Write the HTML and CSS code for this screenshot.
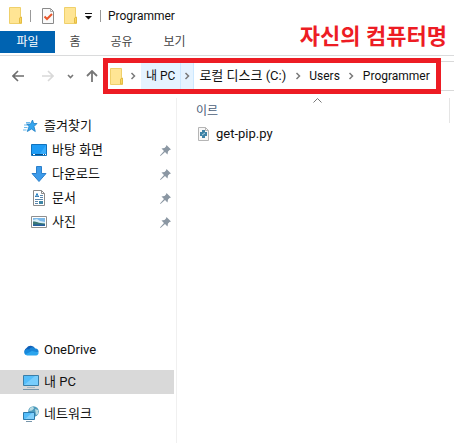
FILE: index.html
```html
<!DOCTYPE html>
<html lang="ko">
<head>
<meta charset="utf-8">
<title>Programmer</title>
<link rel="stylesheet" href="styles.css">
</head>
<body>
<svg class="defs" aria-hidden="true">
  <symbol id="folder" viewBox="0 0 14 17">
    <path d="M.5 .5h11v10h1v6H.5z" fill="#ffe594" stroke="#efd06b"/>
    <path d="M10.500 16v-5l2-1v6z" fill="#fbd65f" stroke="#e3bc45"/>
  </symbol>
  <symbol id="chev" viewBox="0 0 6 8"><path d="M1.500 1l3 3-3 3" fill="none" stroke="#7a7a7a" stroke-width="1.500"/></symbol>
  <symbol id="pin" viewBox="0 0 11 11">
    <path d="M6.500 0L11 4.500 9.500 5 8 6.500 7.500 9.500 5 7 .5 11 0 10.500 4 6 1.500 3.500 4.500 3 6 1.500z" fill="#8b97a3"/>
  </symbol>
</svg>

<header class="titlebar">
  <svg class="folder" aria-hidden="true"><use href="#folder"/></svg>
  <span class="bar"></span>
  <button class="quick check" aria-label="속성">
    <svg width="12" height="16" viewBox="0 0 12 16"><path d="M.5 .5h8l3 3v12H.5z" fill="#fafafa" stroke="#8a8a8a"/><path d="M8.500 .5v3h3" fill="none" stroke="#aaa"/><path d="M2.500 8.500l2.500 2.500 5-5" fill="none" stroke="#e8562a" stroke-width="2"/></svg>
  </button>
  <button class="quick" aria-label="새 폴더"><svg class="folder"><use href="#folder"/></svg></button>
  <button class="quick menu" aria-label="빠른 실행">
    <svg width="7" height="7" viewBox="0 0 7 7"><path d="M0 0h7v1H0zM0 3h7L3.500 6.500z" fill="#111"/></svg>
  </button>
  <span class="bar"></span>
  <h1 class="title">Programmer</h1>
</header>

<nav class="tabs">
  <button class="tab file">파일</button>
  <button class="tab home">홈</button>
  <button class="tab">공유</button>
  <button class="tab">보기</button>
  <span class="note">자신의 컴퓨터명</span>
</nav>

<div class="toolbar">
  <div class="history">
    <button aria-label="뒤로"><svg width="12" height="12" viewBox="0 0 12 12"><path d="M12 6H1M6 1L1 6l5 5" fill="none" stroke="#6e6e6e" stroke-width="1.600"/></svg></button>
    <button class="forward" aria-label="앞으로"><svg width="12" height="12" viewBox="0 0 12 12"><path d="M0 6h11M6 1l5 5-5 5" fill="none" stroke="#d9d9d9" stroke-width="1.600"/></svg></button>
    <button class="recent" aria-label="최근 위치"><svg width="7" height="5" viewBox="0 0 7 5"><path d="M1 1l2.500 2.500L6 1" fill="none" stroke="#777" stroke-width="1.600"/></svg></button>
    <button aria-label="위로"><svg width="12" height="12" viewBox="0 0 12 12"><path d="M6 12V1M1 6l5-5 5 5" fill="none" stroke="#777" stroke-width="1.800"/></svg></button>
  </div>
  <div class="address">
    <svg class="folder" aria-hidden="true"><use href="#folder"/></svg>
    <span class="sep first"><svg><use href="#chev"/></svg></span>
    <a class="crumb hot" href="#">내 PC</a>
    <span class="sep hot"><svg><use href="#chev"/></svg></span>
    <a class="crumb drive" href="#">로컬 디스크 (C:)</a>
    <span class="sep"><svg><use href="#chev"/></svg></span>
    <a class="crumb" href="#">Users</a>
    <span class="sep"><svg><use href="#chev"/></svg></span>
    <a class="crumb" href="#">Programmer</a>
    <span class="highlight"></span>
  </div>
</div>

<div class="body">
  <aside class="sidebar">
    <a class="item" href="#">
      <svg width="16" height="16" viewBox="0 0 16 16"><path d="M9.500 2l1.200 3.500H14l-3 3 1.300 5-3.800-2.500-4.200 2.500 1.800-5-2.600-2.500 4 0z" fill="#35a5ee" stroke="#1b7cc4" stroke-width=".8"/><path d="M3 4.500h4M1 7h3M1 9.500h3.500M0 12h3.500" stroke="#6bb9ed"/></svg>
      즐겨찾기</a>
    <a class="item sub" href="#">
      <svg width="16" height="16" viewBox="0 0 16 16"><path d="M.5 2.500h15v11H.5z" fill="#1e9cf5" stroke="#1173bd"/><path d="M8 13L15 3v10z" fill="#38acfb"/><path d="M1 12.500h14" stroke="#0b4f86"/><path d="M2 12.500h2M12 12.500h1M14 12.500h1" stroke="#fff"/></svg>
      바탕 화면<svg class="pin"><use href="#pin"/></svg></a>
    <a class="item sub" href="#">
      <svg width="16" height="16" viewBox="0 0 16 16"><path d="M5.500 .5h5v7h4.500L8 15.500 1 7.500h4.500z" fill="#3d9bea" stroke="#2b7fcb"/></svg>
      다운로드<svg class="pin"><use href="#pin"/></svg></a>
    <a class="item sub" href="#">
      <svg width="16" height="16" viewBox="0 0 16 16"><path d="M2.500 .5h8l3 3v12h-11z" fill="#fff" stroke="#8a8a8a"/><path d="M10.500 .5v3h3" fill="none" stroke="#8a8a8a"/><path d="M4 6.500h4M9 5.500h3M9 7.500h3M4 9.500h8M4 11.500h3M4 13.500h3" stroke="#5c88ad"/><path d="M4.500 7l1.500-3.500L7.500 7" fill="none" stroke="#1c7ac0"/><path d="M8 11h4v3H8z" fill="#3f86a6"/></svg>
      문서<svg class="pin"><use href="#pin"/></svg></a>
    <a class="item sub" href="#">
      <svg width="16" height="16" viewBox="0 0 16 16"><path d="M.5 2.500h15v11H.5z" fill="#fff" stroke="#8f8f8f"/><path d="M2 4h12v8H2z" fill="#7bb8e8"/><path d="M2 6l4-1 3 2 5 1v2H2z" fill="#d8edf7"/><path d="M2 7.500c3-.5 4 1.500 12 2V12H2z" fill="#3b7774"/><path d="M2 10.500h12V12H2z" fill="#255ea0"/></svg>
      사진<svg class="pin"><use href="#pin"/></svg></a>
    <a class="item cloud" href="#">
      <svg width="16" height="16" viewBox="0 0 16 16"><path d="M3 12a3.500 3.500 0 0 1 .5-6A4.800 4.800 0 0 1 12 6.500l-3 5z" fill="#0f5fb8"/><path d="M6 7.500A4 4 0 0 1 12.500 6.500a3.500 3.500 0 0 1 3 4L10 11z" fill="#1986d8"/><path d="M3 13a3 3 0 0 1 0-5.500c2-.7 3 0 4 .8l7 3.700-1 1z" fill="#1689dc"/><path d="M2 12.500l7-3.500 6.500 1.500A2.500 2.500 0 0 1 13 13.500H4z" fill="#2ba5ee"/></svg>
      OneDrive</a>
    <a class="item current" href="#" aria-current="page">
      <svg width="16" height="16" viewBox="0 0 16 16"><path d="M.5 1.500h15v10H.5z" fill="#54bdfa" stroke="#3a7ea8"/><path d="M1 11L12 2h3v9z" fill="#78cdfc"/><path d="M4 13.500h8" stroke="#a3b8c5"/><path d="M0 15.500h16" stroke="#7896aa"/></svg>
      내 PC</a>
    <a class="item network" href="#">
      <svg width="16" height="16" viewBox="0 0 16 16"><circle cx="10.500" cy="5.500" r="5.300" fill="#4c9abb"/><path d="M7 2l3-1.500 1 2-2 2-3 .5zM12 3l3 1v4l-2 1z" fill="#b9dce3"/><path d="M.5 6.500h11v7H.5z" fill="#54bdfa" stroke="#2e7bab"/><path d="M2 13L9 7h2v6z" fill="#82d0fb"/><path d="M3 15.500h6" stroke="#7896aa"/></svg>
      네트워크</a>
  </aside>
  <main class="content">
    <div class="columns">
      <button class="column">이르
        <svg class="sort" width="9" height="5" viewBox="0 0 9 5"><path d="M.5 4.500l4-4 4 4" fill="none" stroke="#777"/></svg>
      </button>
    </div>
    <a class="entry" href="#">
      <svg width="11" height="14" viewBox="0 0 11 14"><path d="M.5 .5h7l3 3v10H.5z" fill="#f7f7f7" stroke="#b5b5b5"/><path d="M7.500 .5v3h3" fill="none" stroke="#b5b5b5"/><path d="M4 3h3v2h2v4H7v2H4V9H2V5h2z" fill="#3d82a6"/><path d="M4 8l3-2" stroke="#b8d6e3"/></svg>
      get-pip.py</a>
  </main>
</div>
</body>
</html>
```
FILE: styles.css
```css
* { box-sizing: border-box; }

body {
  margin: 0;
  min-height: 100vh;
  display: flex;
  flex-direction: column;
  overflow: hidden;
  background: #fff;
  color: #111;
  font: 13px/16px Roboto, "Noto Sans CJK KR", sans-serif;
}

button {
  display: flex;
  align-items: center;
  justify-content: center;
  padding: 0;
  border: 0;
  background: none;
  color: inherit;
  font: inherit;
}

a { color: inherit; text-decoration: none; }
svg { display: block; flex: none; }
.defs { position: absolute; width: 0; height: 0; }
.folder { width: 14px; height: 17px; }

.titlebar {
  display: flex;
  align-items: center;
  height: 31px;
  padding-left: 9px;
}
.bar { width: 1px; height: 12px; margin: 0 7px; background: #999; }
.check { margin: 0 10px 0 4px; }
.menu { margin: 2px 0 0 7px; }
.titlebar .menu + .bar { margin-left: 8px; }
.title { margin: 0; font-size: 12px; font-weight: 400; }

.tabs {
  display: flex;
  height: 25px;
  padding-bottom: 2px;
  border-bottom: 1px solid #dadbdc;
  color: #444;
}
.tab { width: 53px; font-size: 12px; }
.file { width: 55px; background: #0063b1; color: #fff; }
.home { width: 40px; }
.note {
  margin: -6px 7px 0 auto;
  color: #ed1c24;
  font-size: 22px;
  font-weight: 700;
  line-height: 24px;
  white-space: nowrap;
}

.toolbar { display: flex; padding: 5px 0 7px; }
.history { display: flex; align-items: center; padding: 0 5px 0 12px; }
.forward { margin: 0 13px 0 18px; }
.recent { margin-right: 12px; }

.address {
  position: relative;
  flex: 1;
  display: flex;
  align-items: center;
  height: 30px;
  padding-left: 7px;
  border: solid #d9d9d9;
  border-width: 1px 0;
  font-size: 12px;
  white-space: nowrap;
}
.crumb { display: flex; align-items: center; height: 26px; padding: 0 5px; }
.drive { font-size: 13px; }
.sep { display: flex; align-items: center; justify-content: center; width: 13px; height: 26px; }
.sep svg { width: 6px; height: 8px; }
.first { width: 17px; }
.hot { background: #e5f3ff; border: 1px solid #cce8ff; border-width: 0 1px 0 0; }
.highlight {
  position: absolute;
  inset: -4px 13px -4px 0;
  border: 5px solid #ed1c24;
  pointer-events: none;
}

.body { display: flex; flex: 1; }
.sidebar {
  width: 177px;
  padding: 16px 2px 0 0;
  border-right: 1px solid #f0f0f0;
}
.item {
  display: flex;
  align-items: center;
  gap: 5px;
  height: 24px;
  padding-left: 23px;
}
.sub { padding-left: 31px; }
.pin { width: 11px; height: 11px; margin: 0 3px 0 auto; }
.cloud { margin-top: 104px; }
.current { margin: 8px 0; background: #d9d9d9; }

.content { flex: 1; min-width: 0; padding-right: 4px; }
.columns { display: flex; height: 25px; border-right: 1px solid #e5e5e5; }
.column {
  position: relative;
  flex: 1;
  justify-content: flex-start;
  padding-left: 19px;
  font-size: 12px;
  color: #4c607a;
}
.sort { position: absolute; top: 0; left: 50%; }
.entry {
  display: flex;
  align-items: center;
  gap: 7px;
  height: 22px;
  padding-left: 21px;
}
```
